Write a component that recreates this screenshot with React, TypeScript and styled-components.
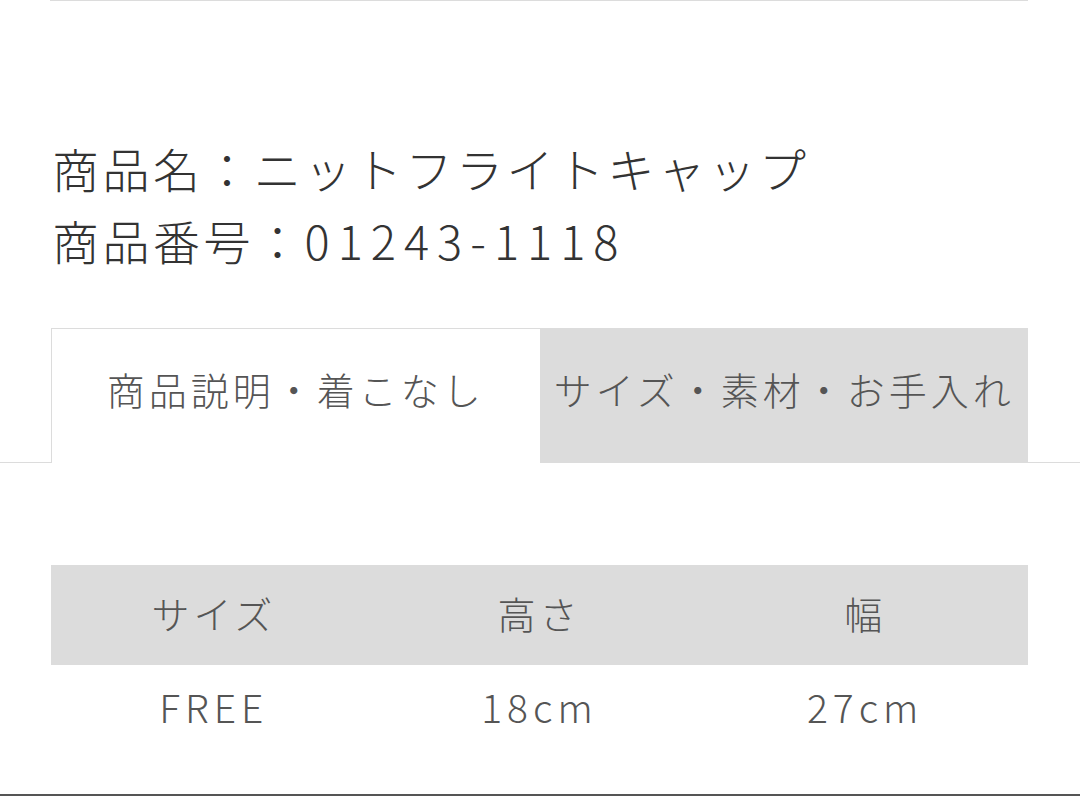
import React, { useState } from 'react'
import styled, { createGlobalStyle } from 'styled-components'

const GlobalStyle = createGlobalStyle`
  html, body {
    margin: 0;
    padding: 0;
    background: #fff;
  }
  body {
    font-family: 'Noto Sans CJK JP', 'Noto Sans', sans-serif;
    color: #333;
  }
`

const tabs = ['商品説明・着こなし', 'サイズ・素材・お手入れ']

const sizes = [{ size: 'FREE', height: '18cm', width: '27cm' }]

const App = () => {
  const [active, setActive] = useState<number>(0)

  return (
    <Page>
      <GlobalStyle />
      <TopRule />
      <ProductInfo>
        <InfoLine>商品名：ニットフライトキャップ</InfoLine>
        <InfoLine>
          商品番号：<Code>01243-1118</Code>
        </InfoLine>
      </ProductInfo>
      <TabBar>
        <TabList>
          {tabs.map((label, i) => (
            <Tab key={label} $active={active === i} onClick={() => setActive(i)}>
              {label}
            </Tab>
          ))}
        </TabList>
      </TabBar>
      <SizeTable>
        <thead>
          <tr>
            <HeadCell>サイズ</HeadCell>
            <HeadCell>高さ</HeadCell>
            <HeadCell>幅</HeadCell>
          </tr>
        </thead>
        <tbody>
          {sizes.map((row) => (
            <tr key={row.size}>
              <BodyCell>{row.size}</BodyCell>
              <BodyCell>{row.height}</BodyCell>
              <BodyCell>{row.width}</BodyCell>
            </tr>
          ))}
        </tbody>
      </SizeTable>
      <BottomRule />
    </Page>
  )
}

const Page = styled.div`
  width: 1080px;
  height: 796px;
  overflow: hidden;
  display: flex;
  flex-direction: column;
`
const TopRule = styled.div`
  margin: 0 52px 0 50px;
  height: 1px;
  background: #dcdcdc;
`
const ProductInfo = styled.div`
  margin: 131px 0 0 52px;
  display: flex;
  flex-direction: column;
`
const InfoLine = styled.p`
  margin: 0;
  font-size: 47px;
  font-weight: 300;
  line-height: 72px;
  letter-spacing: 3.5px;
  color: #333;
`
const Code = styled.span`
  letter-spacing: 8px;
`
const TabBar = styled.div`
  margin-top: 52px;
  border-bottom: 1px solid #dcdcdc;
`
const TabList = styled.div`
  margin: 0 52px 0 51px;
  display: grid;
  grid-template-columns: 1fr 1fr;
`
const Tab = styled.button<{ $active: boolean }>`
  height: 135px;
  margin-bottom: -1px;
  padding: 0 0 16px;
  border: none;
  border-top: 1px solid #dcdcdc;
  border-left: 1px solid ${({ $active }) => ($active ? '#dcdcdc' : 'transparent')};
  background: ${({ $active }) => ($active ? '#fff' : '#dcdcdc')};
  font-family: inherit;
  font-size: 38px;
  font-weight: 300;
  letter-spacing: 4px;
  color: #555;
  cursor: pointer;
`
const SizeTable = styled.table`
  margin: 102px 52px 0 51px;
  width: 977px;
  border-collapse: collapse;
  table-layout: fixed;
`
const HeadCell = styled.th`
  height: 94px;
  padding: 0 0 6px;
  background: #dcdcdc;
  font-weight: 300;
  font-size: 38px;
  letter-spacing: 4px;
  color: #555;
`
const BodyCell = styled.td`
  height: 82px;
  padding: 0 0 18px;
  text-align: center;
  font-size: 39px;
  font-weight: 300;
  letter-spacing: 5px;
  color: #555;
`
const BottomRule = styled.div`
  margin-top: auto;
  height: 2px;
  background: #555;
`

export default App
